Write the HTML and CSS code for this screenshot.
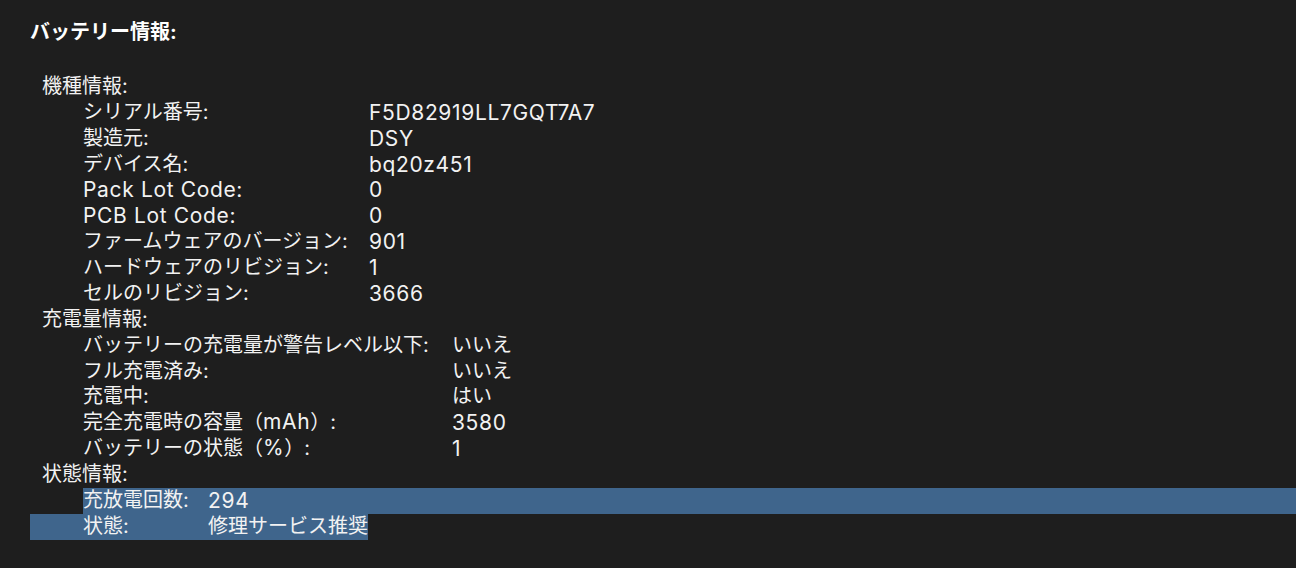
FILE: index.html
```html
<!DOCTYPE html>
<html lang="ja">
<head>
<meta charset="utf-8">
<title>バッテリー情報</title>
<link rel="stylesheet" href="styles.css">
</head>
<body>
<main class="report">
  <h1 class="title">バッテリー情報:</h1>

  <section class="group">
    <div class="group-head">機種情報:</div>
    <dl class="rows rows-model">
      <div class="row"><dt>シリアル番号:</dt><dd class="lat">F5D82919LL7GQT7A7</dd></div>
      <div class="row"><dt>製造元:</dt><dd class="lat">DSY</dd></div>
      <div class="row"><dt>デバイス名:</dt><dd class="lat">bq20z451</dd></div>
      <div class="row"><dt class="lat">Pack Lot Code:</dt><dd class="lat">0</dd></div>
      <div class="row"><dt class="lat">PCB Lot Code:</dt><dd class="lat">0</dd></div>
      <div class="row"><dt>ファームウェアのバージョン:</dt><dd class="lat">901</dd></div>
      <div class="row"><dt>ハードウェアのリビジョン:</dt><dd class="lat">1</dd></div>
      <div class="row"><dt>セルのリビジョン:</dt><dd class="lat">3666</dd></div>
    </dl>
  </section>

  <section class="group">
    <div class="group-head">充電量情報:</div>
    <dl class="rows rows-charge">
      <div class="row"><dt>バッテリーの充電量が警告レベル以下:</dt><dd>いいえ</dd></div>
      <div class="row"><dt>フル充電済み:</dt><dd>いいえ</dd></div>
      <div class="row"><dt>充電中:</dt><dd>はい</dd></div>
      <div class="row"><dt>完全充電時の容量（<span class="lat">mAh</span>）:</dt><dd class="lat">3580</dd></div>
      <div class="row"><dt>バッテリーの状態（<span class="lat">%</span>）:</dt><dd class="lat">1</dd></div>
    </dl>
  </section>

  <section class="group">
    <div class="group-head">状態情報:</div>
    <dl class="rows rows-health">
      <div class="row sel-line"><dt>充放電回数:</dt><dd class="lat">294</dd></div>
      <div class="row sel-end"><dt>状態:</dt><dd>修理サービス推奨</dd></div>
    </dl>
  </section>
</main>
</body>
</html>
```

FILE: styles.css
```css
html, body {
  margin: 0;
  padding: 0;
  background: #1e1e1e;
}

body {
  width: 1296px;
  height: 568px;
  overflow: hidden;
  color: #f2f2f2;
  font-family: Inter, "Noto Sans CJK JP", sans-serif;
  font-size: 20px;
  line-height: 25.875px;
}

.report {
  padding: 20px 0 0 30px;
}

.title {
  margin: 0 0 28px 0;
  font-size: 20px;
  font-weight: 700;
  line-height: 25.875px;
  color: #ffffff;
}

.group {
  margin: 0;
}

.group-head {
  margin-left: 12px;
}

.rows {
  margin: 0;
}

.row {
  display: grid;
  height: 25.875px;
  margin-left: 53px;
}

.row dt,
.row dd {
  margin: 0;
  white-space: nowrap;
}

.lat {
  font-size: 21px;
  letter-spacing: 0.65px;
}

.row span.lat {
  line-height: 1;
}

.rows-model .row { grid-template-columns: 286px auto; }
.rows-charge .row { grid-template-columns: 369px auto; }
.rows-health .row { grid-template-columns: 125px auto; }

.sel-line {
  background: #3f658c;
}

.sel-end {
  margin-left: 0;
  padding-left: 53px;
  width: max-content;
  background: #3f658c;
}
```
